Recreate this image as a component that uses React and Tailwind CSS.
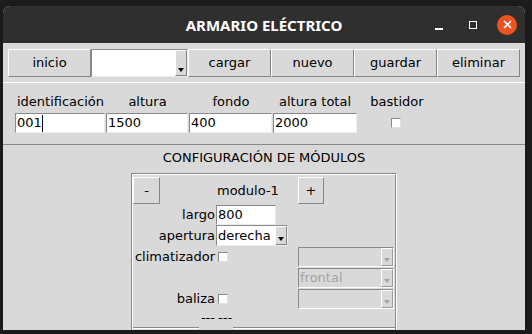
import React from 'react';

function RaisedButton({ w, h = 'h-[28px]', children }) {
  return (
    <div className={`${w} ${h} shrink-0 flex items-center justify-center bg-[#d9d9d9] border border-t-white border-l-white border-r-[#858585] border-b-[#858585]`}>
      {children}
    </div>
  );
}

function Arrow({ disabled }) {
  return (
    <div className={`w-0 h-0 border-l-[3px] border-r-[3px] border-t-[4px] border-l-transparent border-r-transparent ${disabled ? 'border-t-[#a3a3a3]' : 'border-t-black'}`} />
  );
}

function Combo({ w, h, value, arrowW = 'w-[12px]' }) {
  return (
    <div className={`${w} ${h} shrink-0 flex bg-white border border-t-[#8a8a8a] border-l-[#8a8a8a] border-r-[#ececec] border-b-[#ececec]`}>
      <div className="flex-1 flex items-center pl-[1px] leading-[16px]">{value}</div>
      <div className={`${arrowW} flex items-end justify-center pb-[3px] bg-[#d9d9d9] border border-t-white border-l-white border-r-[#858585] border-b-[#858585]`}>
        <Arrow />
      </div>
    </div>
  );
}

function DisabledCombo({ value }) {
  return (
    <div className="w-[96px] h-[20px] flex bg-[#d9d9d9] border border-t-[#8a8a8a] border-l-[#8a8a8a] border-r-white border-b-white">
      <div className="flex-1 flex items-center pl-[1px] text-[#a3a3a3]">{value}</div>
      <div className="w-[12px] flex items-end justify-center pb-[3px] border border-t-white border-l-white border-r-[#9a9a9a] border-b-[#9a9a9a]">
        <Arrow disabled />
      </div>
    </div>
  );
}

function Entry({ w, value, cursor }) {
  return (
    <div className={`${w} h-[20px] flex items-center pl-[1px] bg-white border border-t-[#8a8a8a] border-l-[#8a8a8a] border-r-[#ececec] border-b-[#ececec]`}>
      <span>{value}</span>
      {cursor && <span className="w-[1px] h-[17px] bg-black" />}
    </div>
  );
}

function Check() {
  return <div className="w-[10px] h-[10px] bg-white border border-t-[#8a8a8a] border-l-[#8a8a8a] border-r-[#e0e0e0] border-b-[#e0e0e0]" />;
}

function GrooveLine({ w }) {
  return <div className={`${w} h-[2px] border-t border-b border-t-[#8a8a8a] border-b-white`} />;
}

export default function App() {
  return (
    <div className="w-[532px] h-[334px] bg-[#1b1b1b] pt-[6px] pl-[3px] overflow-hidden font-['DejaVu_Sans',sans-serif] text-[13px] leading-[16px] text-black">
      <div className="w-[522px] h-[324px] rounded-t-[7px] overflow-hidden flex flex-col bg-[#d9d9d9]">
        {/* title bar */}
        <div className="h-[37px] shrink-0 bg-[#302f2f] grid grid-cols-[1fr_auto_1fr] items-center">
          <div />
          <span className="text-white font-['Noto_Sans',sans-serif] font-bold text-[15px] leading-[20px]">ARMARIO ELÉCTRICO</span>
          <div className="flex items-center justify-end pr-[8px]">
            <div className="h-[8px] flex items-end mt-[3px]">
              <div className="w-[8px] h-[2px] bg-white" />
            </div>
            <div className="w-[8px] h-[8px] border-[1.5px] border-white ml-[26px]" />
            <div className="w-[20px] h-[20px] rounded-full bg-[#e95420] ml-[20px] flex items-center justify-center">
              <svg width="9" height="9" viewBox="0 0 9 9">
                <path d="M1 1L8 8M8 1L1 8" stroke="white" strokeWidth="1.6" />
              </svg>
            </div>
          </div>
        </div>

        {/* toolbar */}
        <div className="flex pl-[5px] pt-[6px]">
          <RaisedButton w="w-[83px]">inicio</RaisedButton>
          <Combo w="w-[97px]" h="h-[28px]" value="" />
          <RaisedButton w="w-[83px]">cargar</RaisedButton>
          <RaisedButton w="w-[83px]">nuevo</RaisedButton>
          <RaisedButton w="w-[83px]">guardar</RaisedButton>
          <RaisedButton w="w-[83px]">eliminar</RaisedButton>
        </div>

        {/* datos del armario */}
        <div className="mt-[5px] h-[63px] shrink-0 border-t border-b border-t-white border-b-[#8a8a8a] pl-[12px] pt-[11px]">
          <div className="grid grid-cols-[91px_83px_84px_84px_80px] gap-y-[3px] items-center">
            <span className="text-center">identificación</span>
            <span className="text-center">altura</span>
            <span className="text-center">fondo</span>
            <span className="text-center">altura total</span>
            <span className="text-center">bastidor</span>
            <Entry w="w-[90px]" value="001" cursor />
            <Entry w="w-[82px]" value="1500" />
            <Entry w="w-[83px]" value="400" />
            <Entry w="w-[84px]" value="2000" />
            <div className="flex justify-center pr-[3px]">
              <Check />
            </div>
          </div>
        </div>

        {/* configuración de módulos */}
        <div className="mt-[5px] h-[16px] shrink-0 text-center">CONFIGURACIÓN DE MÓDULOS</div>

        <div className="mt-[7px] ml-[128px] w-[266px] flex-1 min-h-0 border-t border-l border-r border-t-[#8a8a8a] border-l-[#8a8a8a] border-r-white">
          <div className="h-full border-t border-l border-r border-t-white border-l-white border-r-[#8a8a8a] pt-[2px]">
            <div className="grid grid-cols-[83px_82px_97px] grid-rows-[27px_21px_21px_21px_21px_21px_18px] items-center">
              <RaisedButton w="w-[27px]" h="h-[27px]">-</RaisedButton>
              <span className="pl-[1px]">modulo-1</span>
              <RaisedButton w="w-[26px]" h="h-[27px]">+</RaisedButton>

              <span className="text-right pr-[1px]">largo</span>
              <Entry w="w-[60px]" value="800" />
              <div />

              <span className="text-right pr-[1px]">apertura</span>
              <Combo w="w-[72px]" h="h-[21px]" value="derecha" />
              <div />

              <span className="text-right pr-[1px]">climatizador</span>
              <div className="pl-[2px]"><Check /></div>
              <DisabledCombo value="" />

              <div />
              <div />
              <DisabledCombo value="frontal" />

              <span className="text-right pr-[1px]">baliza</span>
              <div className="pl-[2px]"><Check /></div>
              <DisabledCombo value="" />

              <span className="text-right pr-[1px]">---</span>
              <span className="pl-[2px]">---</span>
              <div />
            </div>
            <div className="flex">
              <GrooveLine w="w-[66px]" />
              <div className="w-[34px]" />
              <GrooveLine w="flex-1" />
            </div>
          </div>
        </div>
      </div>
    </div>
  );
}
